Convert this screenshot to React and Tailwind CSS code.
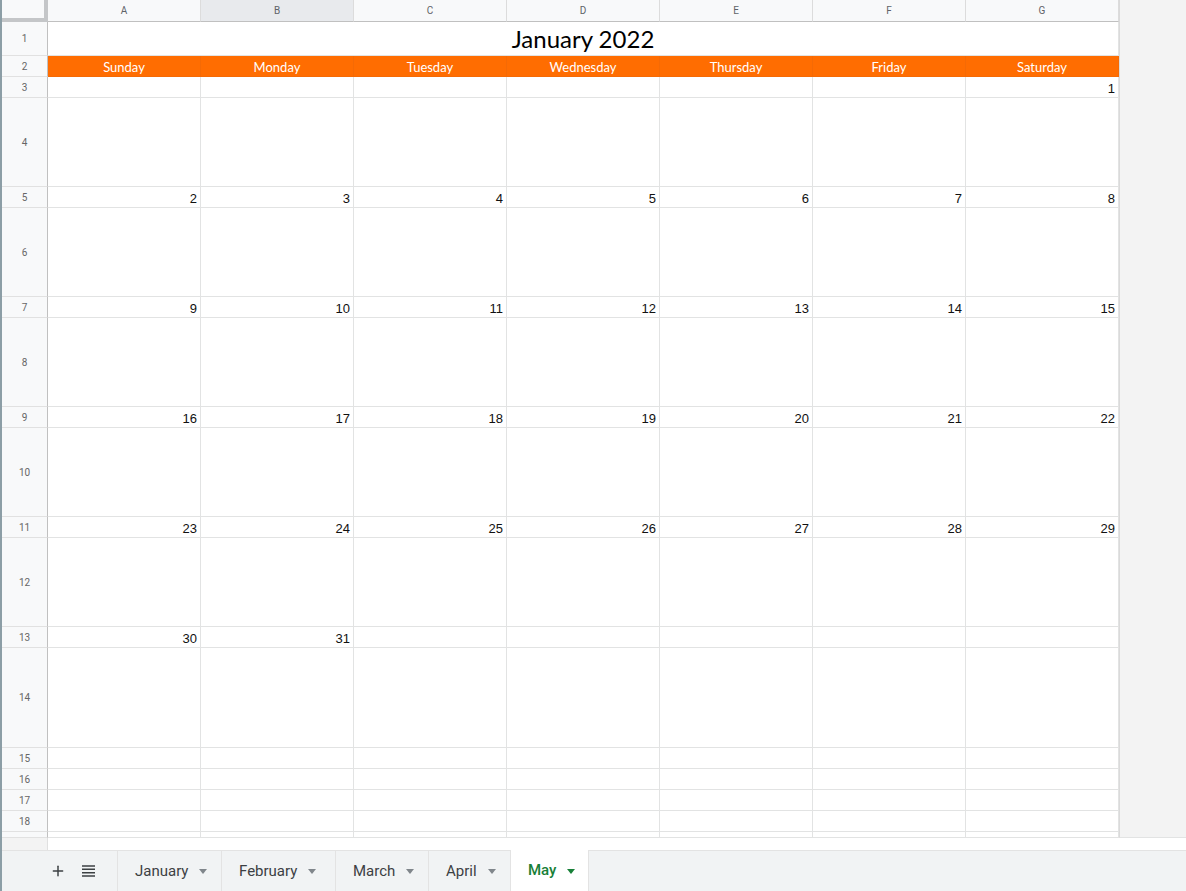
import { Plus } from "lucide-react";

const COLS = ["A", "B", "C", "D", "E", "F", "G"];
const DAYS = ["Sunday", "Monday", "Tuesday", "Wednesday", "Thursday", "Friday", "Saturday"];
const WEEKS = [
  [null, null, null, null, null, null, 1],
  [2, 3, 4, 5, 6, 7, 8],
  [9, 10, 11, 12, 13, 14, 15],
  [16, 17, 18, 19, 20, 21, 22],
  [23, 24, 25, 26, 27, 28, 29],
  [30, 31, null, null, null, null, null],
];

const rows = [
  { n: 1, h: "h-[34px]", type: "title" },
  { n: 2, h: "h-[21px]", type: "days" },
];
WEEKS.forEach((week, i) => {
  rows.push({ n: 3 + i * 2, h: "h-[21px]", type: "nums", week });
  rows.push({ n: 4 + i * 2, h: i === 5 ? "h-[100px]" : "h-[89px]", type: "empty" });
});
[15, 16, 17, 18].forEach((n) => rows.push({ n, h: "h-[21px]", type: "empty" }));
rows.push({ n: null, h: "h-[6px]", type: "empty" });

const TABS = ["January", "February", "March", "April", "May"];

const Caret = ({ green }) => (
  <svg width="8" height="5" viewBox="0 0 8 5" className="ml-[11px] mt-[1px]">
    <path d="M0 0h8L4 5z" fill={green ? "#188038" : "#80868b"} />
  </svg>
);

const RowHeader = ({ n, h }) => (
  <div className={`${h} w-[46px] shrink-0 bg-[#f8f9fa] border-r border-r-[#c0c0c0] border-b border-b-[#e1e1e1] flex items-center justify-center text-[10px] text-[#666]`}>
    {n}
  </div>
);

const Row = ({ row }) => {
  if (row.type === "title") {
    return (
      <div className="flex">
        <RowHeader n={row.n} h={row.h} />
        <div className={`${row.h} w-[1071px] border-b border-r border-[#e2e3e3] flex items-end justify-center pb-[1px] text-[24px] leading-[30px] text-black font-['Lato',sans-serif]`}>
          January 2022
        </div>
      </div>
    );
  }
  return (
    <div className="flex">
      <RowHeader n={row.n} h={row.h} />
      {COLS.map((c, i) => {
        if (row.type === "days") {
          return (
            <div key={c} className={`${row.h} w-[153px] bg-[#ff6d01] border-r border-b border-[#f56a05] flex items-center justify-center pt-[3px] text-white text-[13px] font-normal font-['Lato',sans-serif]`}>
              {DAYS[i]}
            </div>
          );
        }
        return (
          <div key={c} className={`${row.h} w-[153px] border-r border-b border-[#e2e3e3] flex items-end justify-end pr-[3px] text-[13px] leading-[16px] text-[#111] font-['Liberation_Sans',Arial,sans-serif]`}>
            {row.type === "nums" ? row.week[i] : null}
          </div>
        );
      })}
    </div>
  );
};

export default function App() {
  return (
    <div className="w-[1186px] h-[891px] flex flex-col bg-white border-l-2 border-[#8c9ea6] overflow-hidden font-['Roboto',Arial,sans-serif]">
      <div className="flex h-[838px]">
        <div className="w-[1117px] flex flex-col">
          {/* column headers */}
          <div className="flex h-[22px]">
            <div className="w-[46px] h-[22px] bg-[#f8f9fa] border-r-4 border-b-4 border-[#c4c6c8]" />
            {COLS.map((c) => (
              <div
                key={c}
                className={`w-[153px] h-[22px] border-r border-r-[#dcdcdc] border-b border-b-[#c0c0c0] flex items-center justify-center text-[10px] text-[#5f6368] ${c === "B" ? "bg-[#e8eaed]" : "bg-[#f8f9fa]"}`}
              >
                {c}
              </div>
            ))}
          </div>
          {rows.map((row, i) => (
            <Row key={i} row={row} />
          ))}
        </div>
        <div className="flex-1 bg-[#f3f3f3] border-l border-[#dadada] border-b border-b-[#e2e3e3]" />
      </div>

      <div className="flex h-[12px]">
        <div className="w-[46px] bg-[#f3f3f3] border-r border-[#e0e0e0]" />
        <div className="flex-1 bg-white" />
      </div>

      {/* sheet tabs */}
      <div className="h-[41px] flex items-stretch bg-[#f1f3f4] border-t border-[#e3e3e3] text-[15px] text-[#3c4043]">
        <div className="w-[116px] flex items-center border-r border-[#e3e3e3]">
          <Plus size={16} strokeWidth={2.2} className="ml-[48px] text-[#3c4043]" />
          <svg width="13" height="12" viewBox="0 0 13 12" className="ml-[16px]">
            <path d="M0 1h13M0 4.3h13M0 7.7h13M0 11h13" stroke="#3c4043" strokeWidth="1.6" />
          </svg>
        </div>
        {TABS.map((t) => {
          const active = t === "May";
          const w = { January: "w-[104px]", February: "w-[114px]", March: "w-[93px]", April: "w-[82px]", May: "w-[78px]" }[t];
          return (
            <div
              key={t}
              className={`${w} flex items-center pl-[17px] border-r border-[#e3e3e3] ${active ? "bg-white text-[#188038] font-medium -mt-px" : ""}`}
            >
              {t}
              <Caret green={active} />
            </div>
          );
        })}
      </div>
    </div>
  );
}
